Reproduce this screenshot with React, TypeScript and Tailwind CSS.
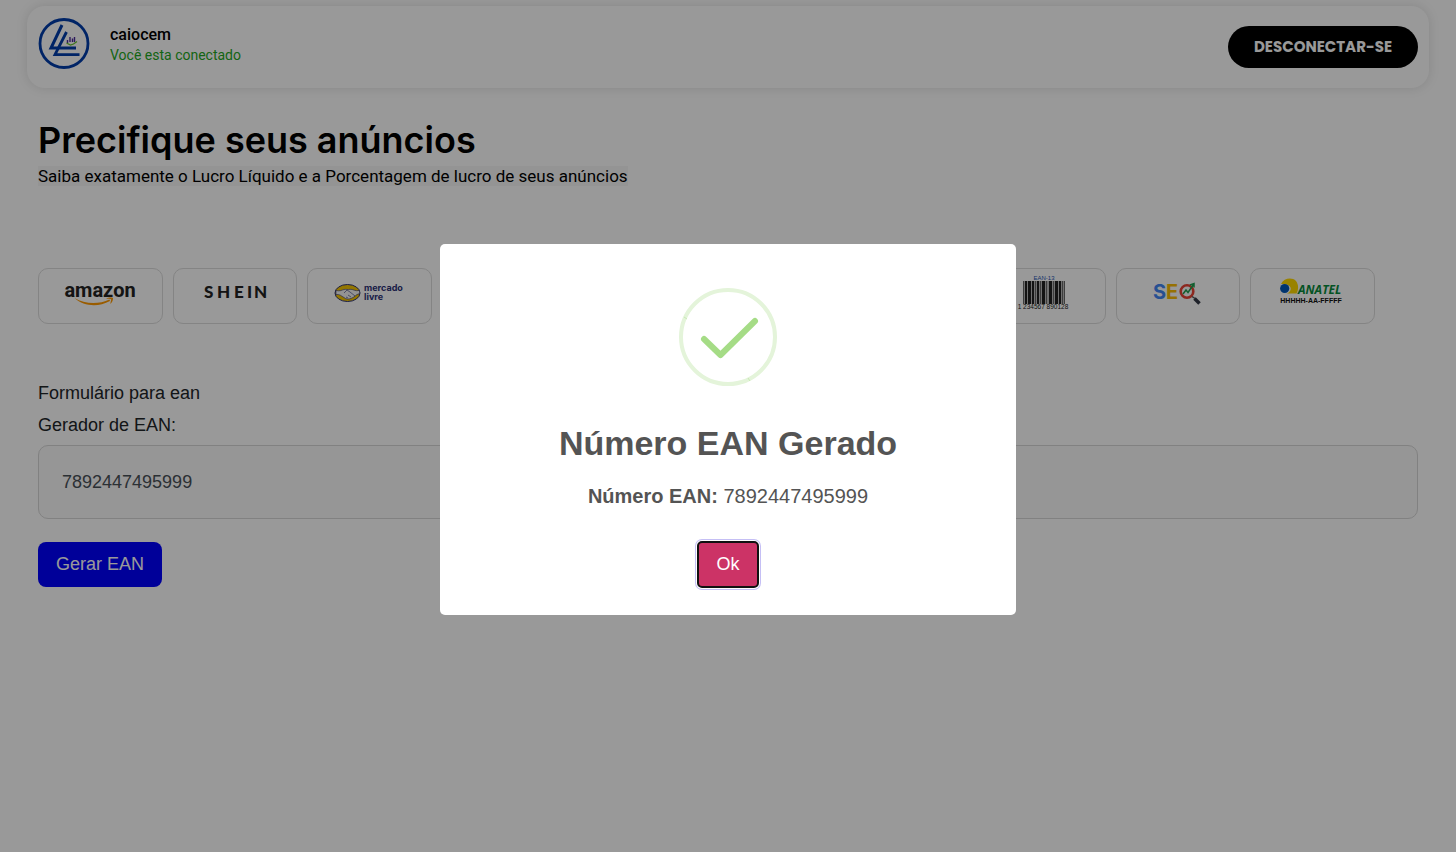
import { useState } from "react";
import type { ReactNode } from "react";

function BrandLogo() {
  return (
    <svg viewBox="0 0 52 52" className="size-[52px]" role="img" aria-label="Logo" fill="none">
      <circle cx="26" cy="25.500" r="24" stroke="#003cab" strokeWidth="2.8" />
      <path d="M24 7 L13 30 H38" stroke="#003cab" strokeWidth="3" />
      <path d="M28.500 14 L17 36.700 H41.500" stroke="#003cab" strokeWidth="2.8" />
      <path d="M29.500 25V22M32 24V19M34.500 24V20.500M36.500 24V19" stroke="#4b2a9b" strokeWidth="1.400" />
      <path d="M28.500 25l4 2 3-1 3.500-2.500" stroke="#66c430" strokeWidth="1.300" />
    </svg>
  );
}

function AmazonLogo() {
  return (
    <svg viewBox="0 0 74 30" className="h-[30px] w-[74px]" role="img" aria-label="amazon">
      <text x="37" y="20" textAnchor="middle" fontFamily="Roboto, sans-serif" fontWeight="700" fontSize="20" fill="#222">amazon</text>
      <path d="M11.500 21C22 27.500 36 27.500 46.500 22.500L47 24C35 30.500 21 29.500 11.500 21Z" fill="#f90" />
      <path d="M43 21.700C45 20.200 49 20.200 50 21C50.300 23 49 25.500 47.300 27C47.500 25 48.600 23 48 22.300C47 21.700 45 21.900 43 21.700Z" fill="#f90" />
    </svg>
  );
}

function SheinLogo() {
  return (
    <svg viewBox="0 0 66 20" className="h-5 w-[66px]" role="img" aria-label="SHEIN">
      <text y="16" fontFamily="Lato, sans-serif" fontWeight="900" fontSize="17" fill="#222">
        <tspan x="2">S</tspan>
        <tspan x="15">H</tspan>
        <tspan x="32">E</tspan>
        <tspan x="45">I</tspan>
        <tspan x="52">N</tspan>
      </text>
    </svg>
  );
}

function MercadoLivreLogo() {
  return (
    <svg viewBox="0 0 72 24" className="h-6 w-[72px]" role="img" aria-label="mercado livre">
      <ellipse cx="13.500" cy="13" rx="12.500" ry="8.500" fill="#f5c500" stroke="#2d3277" strokeWidth="1" />
      <path d="M2 10.500C6 11.500 8 10 10 9.500C12 9 14 10 16 9.300C19 9 21 11.500 25 10.500C26 12 25.500 13 25 14C22 14 21 17 18 18C15 19.500 12 19.500 10 17.500C7 16 6 14 2 14.500Z" fill="#f5f5f5" stroke="#2d3277" strokeWidth=".6" />
      <path d="M10 13l3-3 3 2 5 4M12 17l2 1M14 15l3 2" stroke="#2d3277" strokeWidth=".6" fill="none" />
      <text x="30" y="11" fontFamily="Inter, sans-serif" fontWeight="700" fontSize="9" fill="#2d3277">mercado</text>
      <text x="30" y="20" fontFamily="Inter, sans-serif" fontWeight="700" fontSize="9" fill="#2d3277">livre</text>
    </svg>
  );
}

const bars = [
  [0, 1], [2, 2], [5, 3], [9, 2], [12, 1], [14, 2], [17, 1], [19, 3], [23, 1],
  [26, 3], [30, 1], [32, 3], [36, 2], [39, 1], [41, 1],
];

function BarcodeLogo() {
  return (
    <svg viewBox="0 0 52 36" className="h-9 w-[52px]" role="img" aria-label="EAN-13">
      <text x="27" y="6" textAnchor="middle" fontFamily="Liberation Sans, sans-serif" fontSize="6" fill="#2b56b5">EAN-13</text>
      <rect x="6" y="7" width="42" height="23" fill="#bbb" />
      {bars.map(([x, w]) => (
        <rect key={x} x={6 + x} y="7" width={w} height="23" fill={w === 1 ? "#666" : "#222"} />
      ))}
      <text x="26" y="35" textAnchor="middle" fontFamily="Liberation Sans, sans-serif" fontSize="6.500" fill="#222">1 234567 890128</text>
    </svg>
  );
}

function SeoLogo() {
  return (
    <svg viewBox="0 0 50 26" className="h-[26px] w-[50px]" role="img" aria-label="SEO" fill="none">
      <text y="20" fontFamily="Inter, sans-serif" fontWeight="700" fontSize="20" stroke="none">
        <tspan x="0" fill="#4285f4">S</tspan>
        <tspan x="13" fill="#fbbc05">E</tspan>
      </text>
      <circle cx="34" cy="12.500" r="6.300" stroke="#ea4335" strokeWidth="2.600" />
      <path d="M39 17.500l3 2" stroke="#555" strokeWidth="1.500" />
      <path d="M41.500 19.500l5 5" stroke="#343a46" strokeWidth="3.600" />
      <path d="M30 15l3-4 2 2.500 5.500-8M37 6l4-1.500v4" stroke="#1fa050" strokeWidth="1.500" />
    </svg>
  );
}

function AnatelLogo() {
  return (
    <svg viewBox="0 0 66 30" className="h-[30px] w-[66px]" role="img" aria-label="ANATEL HHHHH-AA-FFFFF">
      <path d="M1 7C4 1 12 0 16 4C19 8 18.500 13 16.500 16.500H7C13 14 12.500 6 1 7Z" fill="#ffd900" />
      <circle cx="4.700" cy="11.500" r="4.600" fill="#0057b8" />
      <text x="18" y="17" fontFamily="Open Sans, sans-serif" fontStyle="italic" fontWeight="700" fontSize="12" fill="#078b3b">ANATEL</text>
      <text x="31" y="26" textAnchor="middle" fontFamily="Liberation Sans, sans-serif" fontWeight="700" fontSize="7" fill="#111">HHHHH-AA-FFFFF</text>
    </svg>
  );
}

const tools: { id: string; logo: ReactNode }[] = [
  { id: "amazon", logo: <AmazonLogo /> },
  { id: "shein", logo: <SheinLogo /> },
  { id: "mercado", logo: <MercadoLivreLogo /> },
  { id: "slot-4", logo: null },
  { id: "slot-5", logo: null },
  { id: "slot-6", logo: null },
  { id: "slot-7", logo: null },
  { id: "ean", logo: <BarcodeLogo /> },
  { id: "seo", logo: <SeoLogo /> },
  { id: "anatel", logo: <AnatelLogo /> },
];

function SuccessIcon() {
  return (
    <svg viewBox="0 0 98 98" className="size-[98px]" fill="none" aria-hidden="true">
      <circle cx="49" cy="49" r="47" stroke="#e4f4da" strokeWidth="4" />
      <path d="M5 29l3 2M69 90l2 3" stroke="#c9eab5" strokeWidth="1" />
      <path d="M25 51L41.500 67L76 33" stroke="#a5dc86" strokeWidth="6" strokeLinecap="round" strokeLinejoin="round" />
    </svg>
  );
}

export default function App() {
  const [open, setOpen] = useState(true);
  const [ean, setEan] = useState("7892447495999");

  return (
    <div className="min-h-screen bg-white font-['Liberation_Sans',Arial,sans-serif] text-[#212529]">
      <div className="px-[27px] pt-1.5">
        <header className="flex h-[82px] items-center justify-between rounded-[18px] bg-white px-[11px] shadow-[0_0_12px_rgba(0,0,0,0.12)]">
          <div className="flex items-center gap-5 pb-1.5 font-[Roboto,sans-serif] text-black">
            <BrandLogo />
            <div className="pt-0.5">
              <p className="text-base leading-5 font-medium">caiocem</p>
              <p className="text-sm leading-5 text-[#1fa824]">Você esta conectado</p>
            </div>
          </div>
          <button className="h-[42px] rounded-full bg-black px-[26px] font-[Poppins,Inter,sans-serif] text-[15px] font-bold text-white">
            DESCONECTAR-SE
          </button>
        </header>
      </div>

      <main className="px-[38px] pt-7">
        <h1 className="font-[Inter,sans-serif] text-4xl leading-12 font-semibold text-black">Precifique seus anúncios</h1>
        <p className="font-[Roboto,sans-serif] text-[17px] leading-6 text-black">
          <span className="bg-[#f7f7f7]">Saiba exatamente o Lucro Líquido e a Porcentagem de lucro de seus anúncios</span>
        </p>

        <nav className="mt-20 mr-[43px] grid grid-cols-10 gap-2.5">
          {tools.map((tool) => (
            <button key={tool.id} className="flex h-14 items-center justify-center rounded-[10px] border border-[#dcdcdc] pb-2">
              {tool.logo}
            </button>
          ))}
        </nav>

        <form className="mt-[53px] text-lg" onSubmit={(e) => e.preventDefault()}>
          <p className="leading-8">Formulário para ean</p>
          <label htmlFor="ean" className="block leading-8">Gerador de EAN:</label>
          <input
            id="ean"
            value={ean}
            onChange={(e) => setEan(e.target.value)}
            className="mt-1 block h-[74px] w-full rounded-[10px] border border-[#d8d8d8] bg-[#fafafa] px-[23px] text-[#495057]"
          />
          <button onClick={() => setOpen(true)} className="mt-[23px] h-[45px] rounded-lg bg-[#0000ff] px-[18px] pb-0.5 text-white">
            Gerar EAN
          </button>
        </form>
      </main>

      {open && (
        <div className="fixed inset-0 flex items-center justify-center bg-black/40 pt-[7px]">
          <div
            role="dialog"
            aria-modal="true"
            aria-labelledby="dialog-title"
            className="flex w-[576px] flex-col items-center rounded-[5px] bg-white pt-11 pb-[27px] text-[#545454]"
          >
            <SuccessIcon />
            <h2 id="dialog-title" className="mt-9 text-[34px] leading-[42px] font-bold">Número EAN Gerado</h2>
            <p className="mt-[18px] text-xl leading-7">
              <b>Número EAN:</b> 7892447495999
            </p>
            <button
              onClick={() => setOpen(false)}
              className="mt-[31px] h-[47px] rounded-[5px] border-2 border-[#111] bg-[#cc3366] px-[17px] pb-0.5 text-lg font-medium text-white shadow-[0_0_0_1px_#fff,0_0_0_2px_#c5bff5]"
            >
              Ok
            </button>
          </div>
        </div>
      )}
    </div>
  );
}
